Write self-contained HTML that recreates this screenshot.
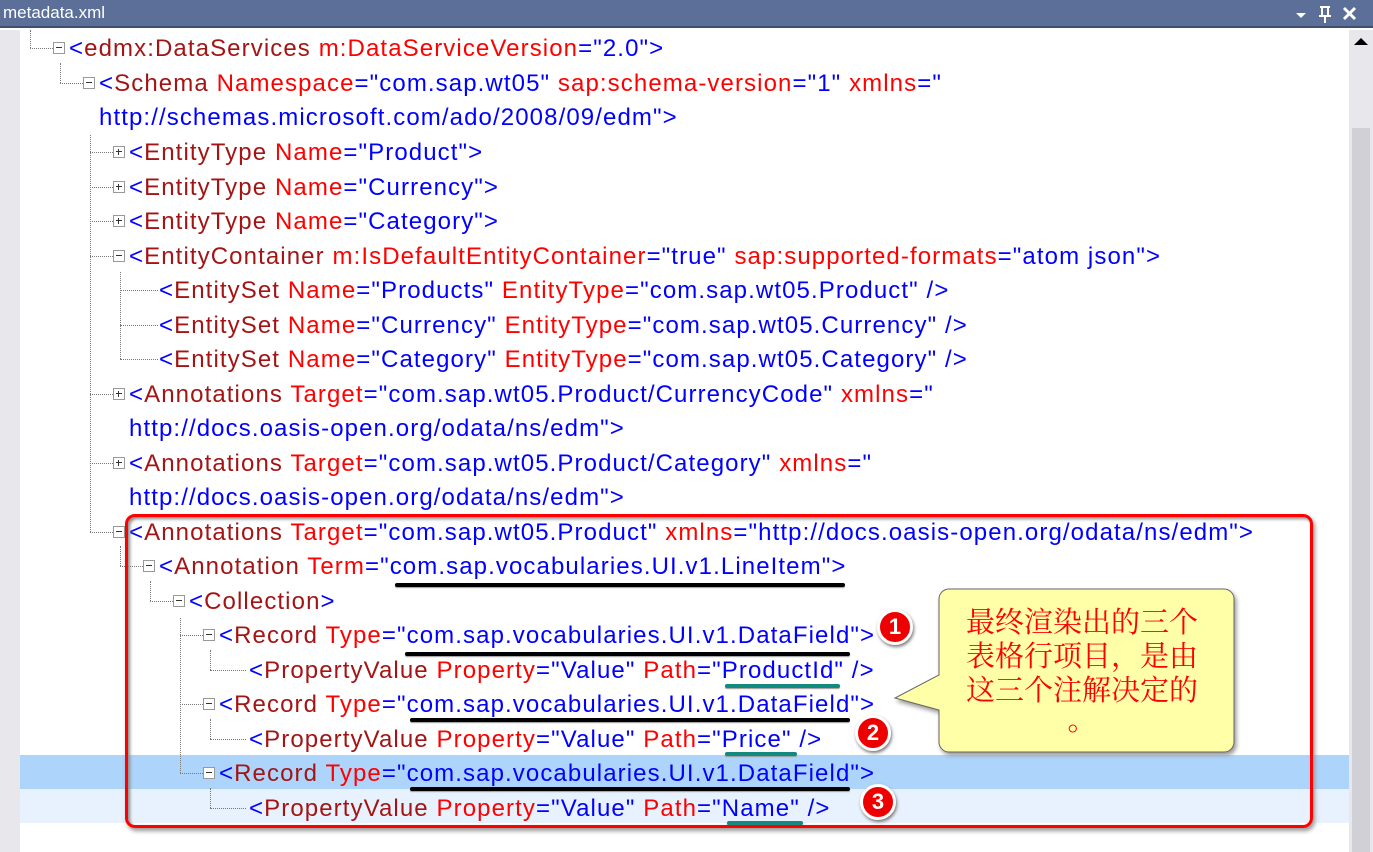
<!DOCTYPE html>
<html><head><meta charset="utf-8"><style>
*{margin:0;padding:0;box-sizing:border-box}
body{width:1373px;height:852px;overflow:hidden;background:#fff;position:relative;font-family:"Liberation Sans",sans-serif}
.t{position:absolute;height:34px;line-height:35px;font-size:24px;letter-spacing:1.1px;white-space:pre;color:#0000ff}
.n{color:#a31515}.a{color:#ff0000}
.e{position:absolute;width:12px;height:12px;border:1px solid #999;background:#fff}
.e::after{content:"";position:absolute;left:2px;top:4px;width:6px;height:1px;background:#333}
.p::before{content:"";position:absolute;left:4px;top:2px;width:1px;height:6px;background:#333}
.h{position:absolute;height:0;border-top:1px dotted #777}
.v{position:absolute;width:0;border-left:1px dotted #777}
.ul{position:absolute;height:4px;background:#000;border-radius:2px;box-shadow:0 1px 1px #999}
.tl{position:absolute;height:4px;background:#138a80;border-radius:2px;box-shadow:0 1px 1px #999}
.c{position:absolute;width:36px;height:36px;border-radius:50%;background:#e00;border:3px solid #fff;box-shadow:1px 2px 3px #777;color:#fff;font-weight:bold;font-size:22px;text-align:center;line-height:30px}
</style></head><body>
<div style="position:absolute;left:0;top:0;width:1373px;height:28px;background:#5b6f98;border-bottom:2px solid #3f4f70"></div>
<div style="position:absolute;left:3px;top:3px;color:#fff;font-size:17px">metadata.xml</div>
<svg style="position:absolute;left:1290px;top:4px" width="80" height="22"><path d="M6 9h10l-5 5z" fill="#fff"/><path d="M30 3h10M32 3v9M38 3v9M29 12h12M35 12v7" stroke="#fff" stroke-width="2" fill="none"/><path d="M54 4l11 11M65 4l-11 11" stroke="#fff" stroke-width="3"/></svg>
<div style="position:absolute;left:0;top:30px;width:20px;height:822px;background:#e8e8ec"></div>
<div style="position:absolute;left:1349px;top:30px;width:24px;height:822px;background:#e8e8ec"></div>
<div style="position:absolute;left:1352px;top:128px;width:18px;height:724px;background:#d0d0d6"></div>
<svg style="position:absolute;left:1352px;top:36px" width="18" height="12"><path d="M2 9h14l-7-7z" fill="#000"/></svg>
<div style="position:absolute;left:20px;top:755px;width:1329px;height:34px;background:#add4fb"></div>
<div style="position:absolute;left:20px;top:789px;width:1329px;height:34px;background:#e8f2fe"></div>

<div class="v" style="left:30px;top:30px;height:18px"></div><div class="h" style="left:30px;top:48px;width:23px"></div>
<div class="v" style="left:60px;top:63px;height:20px"></div><div class="h" style="left:60px;top:83px;width:23px"></div>
<div class="v" style="left:90px;top:135px;height:397px"></div>
<div class="h" style="left:90px;top:152px;width:23px"></div><div class="h" style="left:90px;top:187px;width:23px"></div><div class="h" style="left:90px;top:221px;width:23px"></div><div class="h" style="left:90px;top:256px;width:23px"></div><div class="h" style="left:90px;top:394px;width:23px"></div><div class="h" style="left:90px;top:463px;width:23px"></div><div class="h" style="left:90px;top:532px;width:23px"></div>
<div class="v" style="left:120px;top:272px;height:87px"></div>
<div class="h" style="left:120px;top:290px;width:38px"></div><div class="h" style="left:120px;top:325px;width:38px"></div><div class="h" style="left:120px;top:359px;width:38px"></div>
<div class="v" style="left:120px;top:546px;height:20px"></div><div class="h" style="left:120px;top:566px;width:23px"></div>
<div class="v" style="left:150px;top:581px;height:20px"></div><div class="h" style="left:150px;top:601px;width:23px"></div>
<div class="v" style="left:180px;top:618px;height:155px"></div>
<div class="h" style="left:180px;top:635px;width:23px"></div><div class="h" style="left:180px;top:704px;width:23px"></div><div class="h" style="left:180px;top:773px;width:23px"></div>
<div class="v" style="left:210px;top:650px;height:20px"></div><div class="h" style="left:210px;top:670px;width:36px"></div>
<div class="v" style="left:210px;top:719px;height:20px"></div><div class="h" style="left:210px;top:739px;width:36px"></div>
<div class="v" style="left:210px;top:788px;height:20px"></div><div class="h" style="left:210px;top:808px;width:36px"></div>

<div class="e" style="left:53px;top:42px"></div>
<div class="e" style="left:83px;top:77px"></div>
<div class="e p" style="left:113px;top:146px"></div>
<div class="e p" style="left:113px;top:181px"></div>
<div class="e p" style="left:113px;top:215px"></div>
<div class="e" style="left:113px;top:250px"></div>
<div class="e p" style="left:113px;top:388px"></div>
<div class="e p" style="left:113px;top:457px"></div>
<div class="e" style="left:113px;top:526px"></div>
<div class="e" style="left:143px;top:560px"></div>
<div class="e" style="left:173px;top:595px"></div>
<div class="e" style="left:203px;top:629px"></div>
<div class="e" style="left:203px;top:698px"></div>
<div class="e" style="left:203px;top:767px"></div>

<div class="t" style="left:69px;top:31px">&lt;<span class="n">edmx:DataServices</span> <span class="a">m:DataServiceVersion</span>="2.0"&gt;</div>
<div class="t" style="left:99px;top:66px">&lt;<span class="n">Schema</span> <span class="a">Namespace</span>="com.sap.wt05" <span class="a">sap:schema-version</span>="1" <span class="a">xmlns</span>="</div>
<div class="t" style="left:99px;top:100px">http://schemas.microsoft.com/ado/2008/09/edm"&gt;</div>
<div class="t" style="left:129px;top:135px">&lt;<span class="n">EntityType</span> <span class="a">Name</span>="Product"&gt;</div>
<div class="t" style="left:129px;top:170px">&lt;<span class="n">EntityType</span> <span class="a">Name</span>="Currency"&gt;</div>
<div class="t" style="left:129px;top:204px">&lt;<span class="n">EntityType</span> <span class="a">Name</span>="Category"&gt;</div>
<div class="t" style="left:129px;top:239px">&lt;<span class="n">EntityContainer</span> <span class="a">m:IsDefaultEntityContainer</span>="true" <span class="a">sap:supported-formats</span>="atom json"&gt;</div>
<div class="t" style="left:159px;top:273px">&lt;<span class="n">EntitySet</span> <span class="a">Name</span>="Products" <span class="a">EntityType</span>="com.sap.wt05.Product" /&gt;</div>
<div class="t" style="left:159px;top:308px">&lt;<span class="n">EntitySet</span> <span class="a">Name</span>="Currency" <span class="a">EntityType</span>="com.sap.wt05.Currency" /&gt;</div>
<div class="t" style="left:159px;top:342px">&lt;<span class="n">EntitySet</span> <span class="a">Name</span>="Category" <span class="a">EntityType</span>="com.sap.wt05.Category" /&gt;</div>
<div class="t" style="left:129px;top:377px">&lt;<span class="n">Annotations</span> <span class="a">Target</span>="com.sap.wt05.Product/CurrencyCode" <span class="a">xmlns</span>="</div>
<div class="t" style="left:129px;top:411px">http://docs.oasis-open.org/odata/ns/edm"&gt;</div>
<div class="t" style="left:129px;top:446px">&lt;<span class="n">Annotations</span> <span class="a">Target</span>="com.sap.wt05.Product/Category" <span class="a">xmlns</span>="</div>
<div class="t" style="left:129px;top:480px">http://docs.oasis-open.org/odata/ns/edm"&gt;</div>
<div class="t" style="left:129px;top:515px">&lt;<span class="n">Annotations</span> <span class="a">Target</span>="com.sap.wt05.Product" <span class="a">xmlns</span>="http://docs.oasis-open.org/odata/ns/edm"&gt;</div>
<div class="t" style="left:159px;top:549px">&lt;<span class="n">Annotation</span> <span class="a">Term</span>="com.sap.vocabularies.UI.v1.LineItem"&gt;</div>
<div class="t" style="left:189px;top:584px">&lt;<span class="n">Collection</span>&gt;</div>
<div class="t" style="left:219px;top:618px">&lt;<span class="n">Record</span> <span class="a">Type</span>="com.sap.vocabularies.UI.v1.DataField"&gt;</div>
<div class="t" style="left:249px;top:653px">&lt;<span class="n">PropertyValue</span> <span class="a">Property</span>="Value" <span class="a">Path</span>="ProductId" /&gt;</div>
<div class="t" style="left:219px;top:687px">&lt;<span class="n">Record</span> <span class="a">Type</span>="com.sap.vocabularies.UI.v1.DataField"&gt;</div>
<div class="t" style="left:249px;top:722px">&lt;<span class="n">PropertyValue</span> <span class="a">Property</span>="Value" <span class="a">Path</span>="Price" /&gt;</div>
<div class="t" style="left:219px;top:756px">&lt;<span class="n">Record</span> <span class="a">Type</span>="com.sap.vocabularies.UI.v1.DataField"&gt;</div>
<div class="t" style="left:249px;top:791px">&lt;<span class="n">PropertyValue</span> <span class="a">Property</span>="Value" <span class="a">Path</span>="Name" /&gt;</div>

<div class="ul" style="left:395px;top:583px;width:450px"></div>
<div class="ul" style="left:405px;top:652px;width:445px"></div>
<div class="ul" style="left:410px;top:718px;width:440px"></div>
<div class="ul" style="left:410px;top:787px;width:440px"></div>
<div class="tl" style="left:725px;top:684px;width:115px"></div>
<div class="tl" style="left:725px;top:752px;width:72px"></div>
<div class="tl" style="left:727px;top:821px;width:76px"></div>

<div style="position:absolute;left:125px;top:514px;width:1188px;height:314px;border:3px solid #f00;border-radius:10px;box-shadow:inset 2px 2px 3px #888,2px 3px 4px #999"></div>

<svg style="position:absolute;left:890px;top:585px" width="355" height="175"><path d="M59 4h275a10 10 0 0 1 10 10v143a10 10 0 0 1-10 10H59a10 10 0 0 1-10-10V125L5 113 49 90V14a10 10 0 0 1 10-10z" fill="#ffffa8" stroke="#666" stroke-width="1" style="filter:drop-shadow(2px 3px 2px #999)"/></svg>
<div style="position:absolute;left:932px;top:604px;width:300px;text-align:center;color:#f00;font-size:29px;line-height:34px;white-space:nowrap;font-family:'Noto Serif CJK SC','Noto Sans CJK SC',serif">最终渲染出的三个<br>表格行项目，是由<br>这三个注解决定的<br><span style="position:relative;top:-4px">。</span></div>

<div class="c" style="left:877px;top:609px">1</div>
<div class="c" style="left:855px;top:715px">2</div>
<div class="c" style="left:860px;top:784px">3</div>
</body></html>
